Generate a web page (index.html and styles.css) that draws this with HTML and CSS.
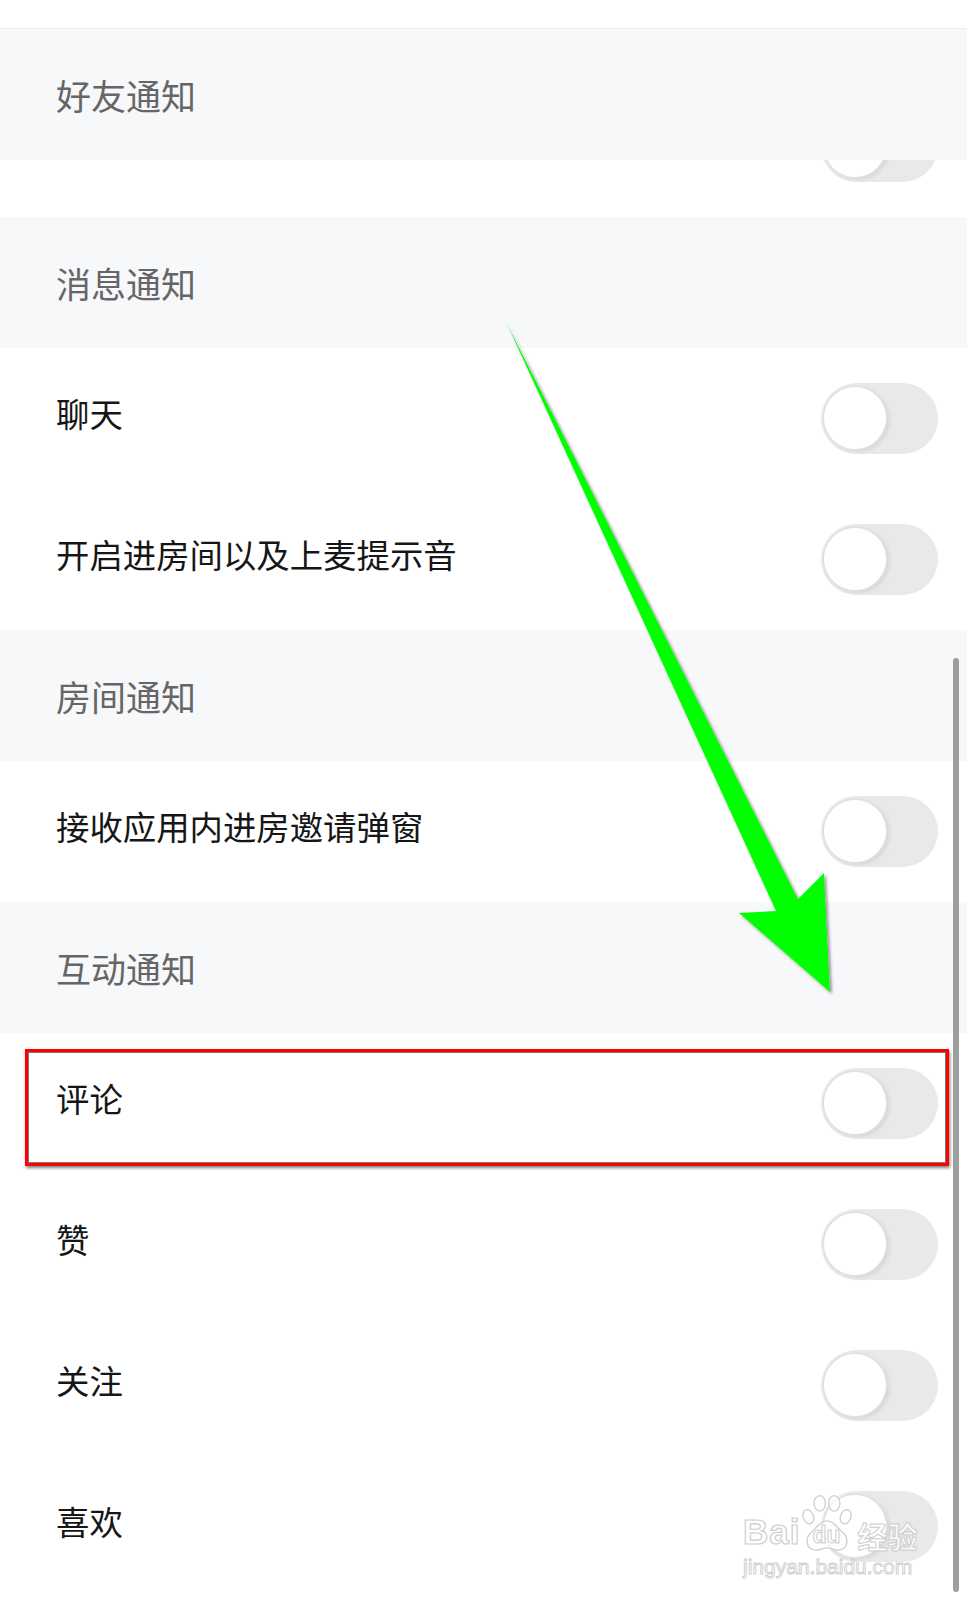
FILE: index.html
```html
<!DOCTYPE html>
<html lang="zh-CN">
<head>
<meta charset="utf-8">
<title>通知设置</title>
<link rel="stylesheet" href="styles.css">
</head>
<body>
<div class="page">
  <div class="topbar"></div>
  <div class="section-head">好友通知</div>
  <div class="row partial"><span class="toggle"><span class="knob"></span></span></div>

  <div class="section-head">消息通知</div>
  <div class="row"><span class="label">聊天</span><span class="toggle"><span class="knob"></span></span></div>
  <div class="row"><span class="label">开启进房间以及上麦提示音</span><span class="toggle"><span class="knob"></span></span></div>

  <div class="section-head">房间通知</div>
  <div class="row"><span class="label">接收应用内进房邀请弹窗</span><span class="toggle"><span class="knob"></span></span></div>

  <div class="section-head">互动通知</div>
  <div class="row"><span class="label">评论</span><span class="toggle"><span class="knob"></span></span></div>
  <div class="row"><span class="label">赞</span><span class="toggle"><span class="knob"></span></span></div>
  <div class="row"><span class="label">关注</span><span class="toggle"><span class="knob"></span></span></div>
  <div class="row"><span class="label">喜欢</span><span class="toggle"><span class="knob"></span></span></div>

  <div class="scrollbar"></div>
  <div class="highlight"></div>

  <svg class="arrow" width="967" height="1600" viewBox="0 0 967 1600">
    <defs>
      <filter id="sh" x="-20%" y="-20%" width="140%" height="140%">
        <feDropShadow dx="2" dy="2" stdDeviation="1.5" flood-color="#5a2a5a" flood-opacity="0.55"/>
      </filter>
    </defs>
    <polygon points="507,324 798,899 824,873 830,992 739,913 776,911" fill="#00ff00" filter="url(#sh)"/>
  </svg>

  <div class="watermark">
    <div class="wm-top">
      <span class="wm-bai">Bai</span>
      <span class="wm-paw">
        <svg width="54" height="58" viewBox="0 0 52 56">
          <g fill="rgba(255,255,255,0.7)" stroke="#cfcfcf" stroke-width="1.3">
            <ellipse cx="8" cy="22" rx="5" ry="7" transform="rotate(-20 8 22)"/>
            <ellipse cx="19" cy="9" rx="5.5" ry="7.5"/>
            <ellipse cx="33" cy="9" rx="5.5" ry="7.5"/>
            <ellipse cx="44" cy="22" rx="5" ry="7" transform="rotate(20 44 22)"/>
            <path d="M26 26 C20 26 16 32 11 37 C5 42 5 53 14 54 C19 55 22 52 26 52 C30 52 33 55 38 54 C47 53 47 42 41 37 C36 32 32 26 26 26 Z"/>
          </g>
        </svg>
        <span class="wm-du">du</span>
      </span>
      <span class="wm-cn">经验</span>
    </div>
    <div class="wm-url">jingyan.baidu.com</div>
  </div>
</div>
</body>
</html>
```

FILE: styles.css
```css
html, body {
  margin: 0;
  padding: 0;
  background: #ffffff;
}

.page {
  position: relative;
  width: 967px;
  height: 1600px;
  overflow: hidden;
  background: #ffffff;
  font-family: "Noto Sans CJK SC", "Noto Sans", sans-serif;
}

.topbar {
  height: 28px;
  background: #ffffff;
  border-bottom: 1px solid #eeeff1;
}

.section-head {
  height: 131px;
  display: flex;
  align-items: center;
  padding-left: 56px;
  background: #f7f8fa;
  color: #666666;
  font-size: 35px;
}

.row {
  height: 141px;
  display: flex;
  align-items: center;
  justify-content: space-between;
  padding: 0 29px 0 56px;
  background: #ffffff;
  color: #161616;
  font-size: 33.4px;
}

.label {
  margin-bottom: 13px;
}

.row.partial {
  height: 57px;
  overflow: hidden;
  align-items: flex-end;
  justify-content: flex-end;
}

.row.partial .toggle {
  margin-bottom: 35px;
}

.toggle {
  position: relative;
  flex: none;
  width: 117px;
  height: 71px;
  border-radius: 36px;
  background: #e9e9e9;
}

.knob {
  position: absolute;
  left: 3px;
  top: 4px;
  width: 62px;
  height: 62px;
  border-radius: 50%;
  background: #ffffff;
  box-shadow: 0 0 0 1.5px #e0e0e0, 3px 2px 5px rgba(0, 0, 0, 0.10);
}

.scrollbar {
  position: absolute;
  left: 953px;
  top: 658px;
  width: 6px;
  height: 934px;
  border-radius: 3px;
  background: #9e9e9e;
}

.highlight {
  position: absolute;
  left: 25px;
  top: 1049px;
  width: 918px;
  height: 111px;
  border: 3.5px solid #ff0000;
  box-shadow: inset 0 0 0 1px #7a7a7a, 1px 2px 3px rgba(0, 0, 0, 0.5);
}

.arrow {
  position: absolute;
  left: 0;
  top: 0;
  pointer-events: none;
}

.watermark {
  position: absolute;
  left: 743px;
  top: 1492px;
  width: 200px;
  font-family: "Liberation Sans", "Noto Sans CJK SC", sans-serif;
  color: rgba(255, 255, 255, 0.85);
}

.wm-top {
  display: flex;
  align-items: flex-end;
  height: 60px;
}

.wm-bai {
  font-size: 35px;
  font-weight: bold;
  line-height: 1;
  margin-bottom: 3px;
  -webkit-text-stroke: 1.2px #cdcdcd;
  letter-spacing: 1px;
}

.wm-paw {
  position: relative;
  display: block;
  width: 54px;
  height: 58px;
}

.wm-paw svg {
  display: block;
}

.wm-du {
  position: absolute;
  left: 12px;
  top: 30px;
  font-size: 23px;
  font-weight: bold;
  line-height: 1;
  -webkit-text-stroke: 1px #cdcdcd;
}

.wm-cn {
  font-family: "Noto Sans CJK SC", sans-serif;
  font-size: 30px;
  font-weight: bold;
  line-height: 1;
  margin-left: 3px;
  margin-bottom: 2px;
  -webkit-text-stroke: 1px #cdcdcd;
}

.wm-url {
  font-size: 21px;
  line-height: 1;
  margin-top: 4px;
  -webkit-text-stroke: 0.9px #cdcdcd;
}
```
